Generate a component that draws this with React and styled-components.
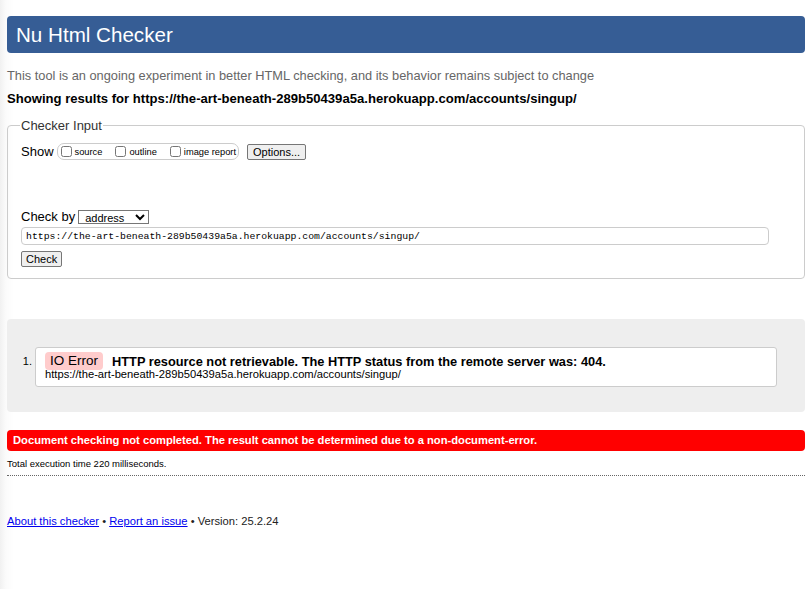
import React from 'react'
import styled, { createGlobalStyle } from 'styled-components'

const GlobalStyle = createGlobalStyle`
    html, body {
        margin: 0;
        padding: 0;
        background: #fff;
    }
    body {
        font-family: "Liberation Sans", Arial, sans-serif;
        color: #000;
        background: linear-gradient(to right, #f1f1f1 0, #fbfbfb 6px, #fff 14px);
        min-height: 589px;
    }
`
//faint grey strip along the left edge, as in the screenshot

const Page = styled.div`
    padding: 16px 2px 0 7px;
`

const Header = styled.h1`
    margin: 0;
    height: 37px;
    background-color: #365d95;
    border-radius: 4px;
    color: #fff;
    font-size: 20.6px;
    font-weight: 400;
    line-height: 37px;
    padding-left: 9px;
`

const Intro = styled.p`
    margin: 14px 0 0;
    font-size: 12.8px;
    line-height: 18px;
    color: #666;
`

const ResultsFor = styled.p`
    margin: 5px 0 0;
    font-size: 13.1px;
    line-height: 18px;
    font-weight: 700;
`

const Fieldset = styled.fieldset`
    margin: 10px 0 0;
    padding: 0 13px 10px 13px;
    border: 1px solid #ccc;
    border-radius: 4px;
    height: 161px;
    box-sizing: border-box;
`

const Legend = styled.legend`
    font-size: 13px;
    color: #333;
    padding: 0 1px;
    margin-left: -1px;
`

const Row = styled.div`
    display: flex;
    align-items: center;
    margin-top: ${props => props.top || '0'};
    font-size: 13px;
`

const Group = styled.span`
    display: inline-flex;
    align-items: center;
    border: 1px solid #ccc;
    border-radius: 7px;
    height: 15px;
    padding: 0 2px 0 2px;
    margin-left: 3px;
`

const Option = styled.label`
    display: inline-flex;
    align-items: center;
    font-size: 9.3px;
    margin-right: 12px;
    &:last-child {
        margin-right: 0;
    }
`

const Box = styled.input`
    width: 11px;
    height: 11px;
    margin: 0 3px 0 1px;
`

const Button = styled.button`
    font-family: "Liberation Sans", Arial, sans-serif;
    font-size: 11px;
    height: 16px;
    padding: 0 ${props => props.pad || '4px'};
    background: #efefef;
    border: 1px solid #767676;
    border-radius: 2px;
    color: #000;
    margin-left: ${props => props.left || '0'};
`

const Select = styled.select`
    font-family: "Liberation Sans", Arial, sans-serif;
    font-size: 11px;
    height: 14px;
    width: 71px;
    padding: 0 0 0 2px;
    border: 1px solid #767676;
    border-radius: 0;
    background: #fff;
    margin-left: 3px;
`

const UrlInput = styled.input`
    display: block;
    box-sizing: border-box;
    width: 748px;
    height: 18px;
    margin-top: 3px;
    padding: 0 4px;
    font-family: "Liberation Mono", "DejaVu Sans Mono", monospace;
    font-size: 9.8px;
    border: 1px solid #ccc;
    border-radius: 4px;
    color: #000;
`

const ResultBox = styled.section`
    margin-top: 40px;
    background: #eee;
    border-radius: 4px;
    height: 93px;
    padding-top: 28px;
    box-sizing: border-box;
`

const List = styled.ol`
    margin: 0;
    padding: 0 28px 0 28px;
    font-size: 9.5px;
`

const Item = styled.li`
    background: #fff;
    border: 1px solid #ccc;
    border-radius: 3px;
    margin-left: 0;
    padding: 4px 9px 6px;
    &::marker {
        font-size: 11px;
    }
`

const Message = styled.p`
    margin: 0;
    display: flex;
    align-items: center;
    gap: 9px;
    font-size: 12.8px;
    font-weight: 700;
`

const Badge = styled.strong`
    background: #fcc;
    border-radius: 4px;
    font-size: 13.5px;
    font-weight: 400;
    padding: 1px 5px 1px 5px;
    line-height: 16px;
`

const Location = styled.p`
    margin: -2px 0 0;
    font-size: 11.2px;
    line-height: 12px;
`

const Failure = styled.p`
    margin: 18px 0 0;
    background: #f00;
    color: #fff;
    font-weight: 700;
    font-size: 11.2px;
    line-height: 21px;
    height: 21px;
    padding-left: 6px;
    border-radius: 4px;
`

const Timing = styled.p`
    margin: 6px 0 0;
    font-size: 9.5px;
    line-height: 14px;
    padding-bottom: 4px;
    border-bottom: 1px dotted #666;
`

const Footer = styled.p`
    margin: 39px 0 0;
    font-size: 11.2px;
    color: #222;
    a {
        color: #00e;
    }
`

export default function App() {
    return (
        <Page>
            <GlobalStyle />
            <Header>Nu Html Checker</Header>
            <Intro>This tool is an ongoing experiment in better HTML checking, and its behavior remains subject to change</Intro>
            <ResultsFor>Showing results for https://the-art-beneath-289b50439a5a.herokuapp.com/accounts/singup/</ResultsFor>
            <Fieldset>
                <Legend>Checker Input</Legend>
                <Row top='10px'>
                    Show
                    <Group>
                        <Option><Box type='checkbox' />source</Option>
                        <Option><Box type='checkbox' />outline</Option>
                        <Option><Box type='checkbox' />image report</Option>
                    </Group>
                    <Button left='8px' pad='5px'>Options...</Button>
                </Row>
                <Row top='49px'>
                    Check by
                    <Select defaultValue='address'>
                        <option value='address'>address</option>
                        <option value='file'>file upload</option>
                        <option value='text'>text input</option>
                    </Select>
                </Row>
                <UrlInput readOnly value='https://the-art-beneath-289b50439a5a.herokuapp.com/accounts/singup/' />
                <Row top='6px'>
                    <Button>Check</Button>
                </Row>
            </Fieldset>
            <ResultBox>
                <List>
                    <Item>
                        <Message>
                            <Badge>IO Error</Badge>
                            HTTP resource not retrievable. The HTTP status from the remote server was: 404.
                        </Message>
                        <Location>https://the-art-beneath-289b50439a5a.herokuapp.com/accounts/singup/</Location>
                    </Item>
                </List>
            </ResultBox>
            <Failure>Document checking not completed. The result cannot be determined due to a non-document-error.</Failure>
            <Timing>Total execution time 220 milliseconds.</Timing>
            <Footer>
                <a href='#'>About this checker</a> • <a href='#'>Report an issue</a> • Version: 25.2.24
            </Footer>
        </Page>
    )
}
